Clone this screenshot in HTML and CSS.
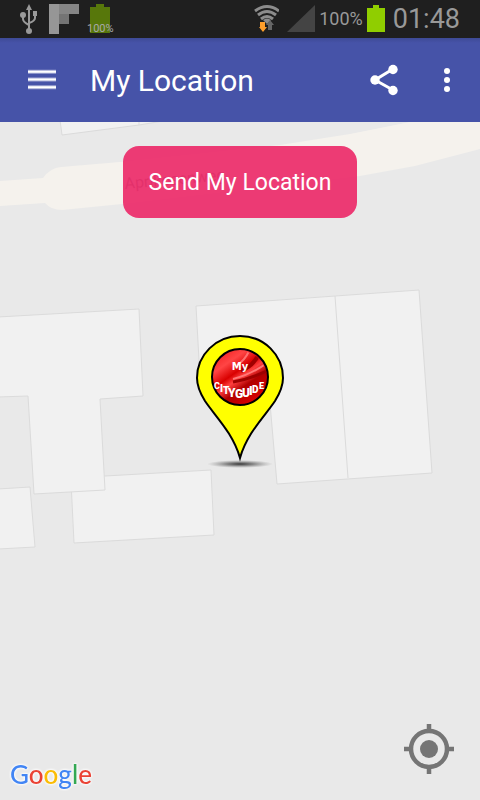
FILE: index.html
```html
<!DOCTYPE html>
<html lang="en">
<head>
<meta charset="utf-8">
<meta name="viewport" content="width=device-width, initial-scale=1">
<title>My Location</title>
<link rel="stylesheet" href="styles.css">
</head>
<body>
<div class="status">
  <div class="status-left">
    <svg width="20" height="32" viewBox="0 0 20 32" fill="none" stroke="#999" stroke-width="2">
      <path d="M10 27V6M4 12v4q0 3 6 6M16 10v5q0 3-6 5"/>
      <path d="M10 1l3 6H7zM14 8h4v5h-4z" fill="#999" stroke="none"/>
      <circle cx="4" cy="12" r="3" fill="#999" stroke="none"/>
      <circle cx="10" cy="28" r="3" fill="#999" stroke="none"/>
    </svg>
    <svg width="30" height="32" viewBox="0 0 30 32">
      <path fill="#969696" d="M0 1h10v30H0z"/><path fill="#858585" d="M10 1h20v10H10z"/><path fill="#747474" d="M10 11h10v10H10z"/>
    </svg>
    <div class="charge">
      <svg width="20" height="32" viewBox="0 0 20 32"><path fill="#57770b" d="M6 1h8v3h6v26H0V4h6z"/></svg>
      <span class="charge-text">100%</span>
    </div>
  </div>
  <div class="status-right">
    <svg width="28" height="32" viewBox="0 0 28 32" fill="none" stroke="#8c8c8c" stroke-width="3">
      <path d="M4 8Q16-1 28 8M7 12q9-7 18 0M10 16q6-5 12 0"/>
      <path d="M12 17q4-3 8 0l-4 4z" fill="#8c8c8c" stroke="none"/>
      <path d="M9 19h5v5h2l-4 5-4-5h1z" fill="#ff9f2c" stroke="none"/>
      <path d="M17 27v-5h-2l4-5 4 5h-2v5z" fill="#666" stroke="none"/>
    </svg>
    <svg width="28" height="32" viewBox="0 0 28 32"><path fill="#444" d="M28 2v27H0z"/></svg>
    <span class="percent">100%</span>
    <svg width="18" height="32" viewBox="0 0 18 32"><path fill="#90ce00" d="M6 2h6v3h6v24H0V5h6z"/></svg>
    <time class="clock">01:48</time>
  </div>
</div>
<header class="bar">
  <button class="icon-button" aria-label="Menu">
    <svg width="28" height="28" viewBox="0 0 28 28" fill="none">
      <path stroke="#a3a9d4" stroke-width="4" d="M0 5.700h28M0 13.500h28M0 21.300h28"/>
      <path stroke="#fff" stroke-width="2" d="M0 5.700h28M0 13.500h28M0 21.300h28"/>
    </svg>
  </button>
  <h1 class="title">My Location</h1>
  <button class="icon-button" aria-label="Share">
    <svg width="28" height="32" viewBox="0 0 28 32" fill="#fff">
      <path d="M23 5L5 16l18 10" fill="none" stroke="#fff" stroke-width="3"/>
      <circle cx="23" cy="5.500" r="4.700"/><circle cx="5" cy="16" r="4.700"/><circle cx="23" cy="26.500" r="4.700"/>
    </svg>
  </button>
  <button class="icon-button more" aria-label="More options">
    <svg width="6" height="26" viewBox="0 0 6 26" fill="#fff"><circle cx="3" cy="4" r="3"/><circle cx="3" cy="13" r="3"/><circle cx="3" cy="22" r="3"/></svg>
  </button>
</header>
<main class="map">
  <svg class="tiles" viewBox="0 122 480 678" preserveAspectRatio="xMidYMid slice">
    <path fill="#f5f2ed" d="M0 181l43-3q7-10 18-11l59-5 160-17 70-11 65-13h65v28l-65 17-55 10-238 28-60 6q-11 0-17-7l-45 3z"/>
    <g fill="#f1f1f1" stroke="#dbdbdb">
      <path d="M60 120l2 15 77-10 30-5zM139 120v5"/>
      <path d="M71 481l34-5 106-6 3 65-140 8z"/>
      <path d="M-2 317l141-8 4 87-43 3 5 91-71 4-6-98-30 1z"/>
      <path d="M-2 489l32-2 5 60-37 2z"/>
      <path d="M196 306l223-16 13 183-155 11-8-92-68 4zM335 296l13 182"/>
    </g>
    <text class="street" transform="rotate(-5 125 189)" x="125" y="189">Aprikosenweg</text>
  </svg>
  <button class="send">Send My Location</button>
  <svg class="pin" width="90" height="138" viewBox="0 0 90 138">
    <defs>
      <radialGradient id="shadow"><stop offset="0" stop-color="#222" stop-opacity=".9"/><stop offset=".4" stop-color="#444" stop-opacity=".6"/><stop offset="1" stop-color="#777" stop-opacity="0"/></radialGradient>
      <linearGradient id="silk" x1="0" y1="0" x2=".7" y2="1"><stop offset="0" stop-color="#e11"/><stop offset=".3" stop-color="#ff4545"/><stop offset=".48" stop-color="#d90000"/><stop offset=".58" stop-color="#ff4040"/><stop offset=".72" stop-color="#b00000"/><stop offset="1" stop-color="#d00"/></linearGradient>
      <clipPath id="disc"><circle cx="45" cy="45" r="27"/></clipPath>
    </defs>
    <ellipse cx="45" cy="131" rx="33" ry="4" fill="url(#shadow)"/>
    <path d="M45 3C21 3 2 22 2 45c0 8 3 15 8 23 10 15 28 32 35 57 7-25 25-42 35-57 5-8 8-15 8-23C88 22 69 3 45 3z" fill="#ff0" stroke="#000" stroke-width="2"/>
    <circle cx="45" cy="44" r="28" fill="url(#silk)" stroke="#000" stroke-width="2"/>
    <g clip-path="url(#disc)" fill="none">
      <path d="M46 38q14-6 18-18" stroke="#a00000" stroke-width="4"/>
      <path d="M42 32q8-5 12-14" stroke="#ff7070" stroke-width="2"/>
      <path d="M38 46q17-4 34-16" stroke="#ff7777" stroke-width="2"/>
      <path d="M38 49q17-3 36-12" stroke="#9d0000" stroke-width="3"/>
    </g>
    <text class="my" x="45" y="37" text-anchor="middle">My</text>
    <text class="guide" x="19 25 28 33 40 47 54 57 64" y="56 59 61 64 65 64 62 60 56"><tspan class="s">C</tspan><tspan class="m">IT</tspan><tspan class="l">YGUI</tspan><tspan class="m">D</tspan><tspan class="s">E</tspan></text>
  </svg>
  <a class="google" href="#" aria-label="Google"><span class="b">G</span><span class="r">o</span><span class="y">o</span><span class="b">g</span><span class="g">l</span><span class="r">e</span></a>
  <button class="locate" aria-label="Find my position">
    <svg width="50" height="50" viewBox="0 0 50 50" fill="none" stroke="#757575">
      <circle cx="25" cy="25" r="18" stroke-width="4.500"/><circle cx="25" cy="25" r="9" fill="#757575" stroke="none"/>
      <path stroke-width="4.500" d="M25 0v7M25 43v7M0 25h7M43 25h7"/>
    </svg>
  </button>
</main>
</body>
</html>
```
FILE: styles.css
```css
* { box-sizing: border-box; }
body {
  margin: 0;
  min-height: 100vh;
  display: flex;
  flex-direction: column;
  font-family: Roboto, sans-serif;
  background: #e9e9e9;
}
svg { display: block; flex: none; }
button { border: 0; margin: 0; padding: 0; background: none; font: inherit; color: inherit; }
.status {
  display: flex;
  justify-content: space-between;
  padding: 3px 20px 3px 19px;
  background: #1f1f1f;
  color: #999;
}
.status-left, .status-right { display: flex; align-items: center; }
.status-left { gap: 10px; }
.status-right { gap: 8px; }
.charge { position: relative; margin-left: 1px; }
.charge-text {
  position: absolute;
  left: -3px;
  bottom: 0;
  font-size: 11px;
  line-height: 12px;
  color: #aaa;
}
.percent { font-size: 18px; line-height: 32px; margin: 0 -4px; }
.clock { font-size: 27px; line-height: 32px; }
.bar {
  display: flex;
  align-items: center;
  padding: 0 30px 0 28px;
  height: 84px;
  background: linear-gradient(#3e4a96, #4653a8 5px);
  color: #fff;
}
.title { flex: 1; margin: 0 0 0 34px; padding-top: 2px; font-size: 30px; line-height: 36px; font-weight: 400; }
.more { margin-left: 46px; }
.map {
  position: relative;
  flex: 1;
  display: flex;
  flex-direction: column;
  align-items: center;
  padding-top: 24px;
}
.tiles { position: absolute; inset: 0; width: 100%; height: 100%; }
.street { font-size: 16px; fill: #333; }
.send {
  position: relative;
  padding: 19px 26px 17px;
  border-radius: 16px;
  background: rgba(236, 48, 110, .95);
  color: #fff;
  font-size: 23px;
  line-height: 36px;
}
.pin { position: absolute; left: calc(50% - 45px); top: calc(50% - 128px); }
.my { font: bold 10px "DejaVu Sans", sans-serif; fill: #fff; }
.guide { font-family: Roboto, sans-serif; font-weight: 900; fill: #fff; }
.s { font-size: 9px; }
.m { font-size: 10px; }
.l { font-size: 12px; }
.google {
  position: absolute;
  left: 10px;
  bottom: 9px;
  font: 500 26px/34px Lato, sans-serif;
  text-decoration: none;
  filter: drop-shadow(0 0 1px #fff) drop-shadow(0 0 1px #fff);
}
.b { color: #4285f4; }
.r { color: #ea4335; }
.y { color: #fbbc05; }
.g { color: #34a853; }
.locate { position: absolute; right: 26px; bottom: 26px; }
```
